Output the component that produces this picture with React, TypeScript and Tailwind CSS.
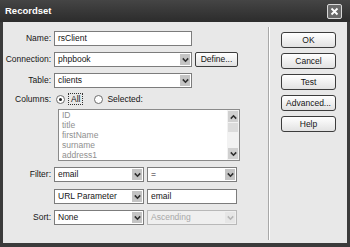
import React from "react";

const font = { fontFamily: '"Liberation Sans", Arial, sans-serif' };

function Chevron({ up = false, light = false }: { up?: boolean; light?: boolean }) {
  const c = light ? "#b5b5b5" : "#2f2f2f";
  return (
    <svg width="7" height="6" viewBox="0 0 7 6">
      {up ? (
        <polyline points="0.8,4.6 3.5,1.8 6.2,4.6" fill="none" stroke={c} strokeWidth="1.6" />
      ) : (
        <polyline points="0.8,1.4 3.5,4.2 6.2,1.4" fill="none" stroke={c} strokeWidth="1.6" />
      )}
    </svg>
  );
}

function Select({ value, className, disabled = false }: { value: string; className: string; disabled?: boolean }) {
  return (
    <div
      className={`flex items-stretch border ${disabled ? "border-[#b8b8b8] bg-[#efefef] text-[#a8a8a8]" : "border-[#7c7c7c] bg-white text-[#151515]"} ${className}`}
    >
      <span className="flex-1 pl-[3px] leading-[13px] truncate">{value}</span>
      <span
        className={`m-px flex w-[10px] items-center justify-center ${disabled ? "bg-[#e6e6e6]" : "bg-[#c4c4c4]"}`}
      >
        <Chevron light={disabled} />
      </span>
    </div>
  );
}

function TextField({ value, className }: { value: string; className: string }) {
  return (
    <div className={`border border-[#7c7c7c] bg-white pl-[3px] leading-[13px] text-[#151515] ${className}`}>
      {value}
    </div>
  );
}

function Label({ children }: { children?: React.ReactNode }) {
  return <span className="w-[51px] shrink-0 pr-[3px] text-right text-[#151515]">{children}</span>;
}

function Btn({ children }: { children: React.ReactNode }) {
  return (
    <div className="flex h-[16px] w-[55px] items-center justify-center rounded-[3px] border border-[#3c3c3c] bg-gradient-to-b from-white to-[#e2e2e2] text-[#151515]">
      {children}
    </div>
  );
}

const columns = ["ID", "title", "firstName", "surname", "address1"];

export default function App() {
  return (
    <div className="flex h-[247px] w-[350px] flex-col text-[8.5px]" style={font}>
      <div className="flex h-[22px] items-center justify-between bg-gradient-to-b from-[#454545] to-[#2c2c2c] pl-[5px] pr-[8px]">
        <span className="text-[9.5px] font-bold text-white">Recordset</span>
        <span className="flex h-[15px] w-[15px] items-center justify-center rounded-[2px] border border-[#d8d8d8] bg-[#6a6a6a]">
          <svg width="9" height="9" viewBox="0 0 9 9">
            <path d="M1.5 1.5 L7.5 7.5 M7.5 1.5 L1.5 7.5" stroke="white" strokeWidth="1.8" />
          </svg>
        </span>
      </div>
      <div className="flex flex-1 border-x-[3px] border-b-[4px] border-[#3b3b3b] bg-[#e8e8e8]">
        <div className="flex w-[265px] flex-col pt-[9px]">
          <div className="flex h-[15px] items-center">
            <Label>Name:</Label>
            <TextField value="rsClient" className="h-[15px] w-[138px]" />
          </div>
          <div className="mt-[6px] flex h-[15px] items-center">
            <Label>Connection:</Label>
            <Select value="phpbook" className="h-[15px] w-[138px]" />
            <div className="ml-[3px] flex h-[15px] w-[43px] items-center justify-center rounded-[2px] border border-[#3c3c3c] bg-gradient-to-b from-white to-[#e2e2e2] text-[#151515]">
              Define...
            </div>
          </div>
          <div className="mt-[6px] flex h-[15px] items-center">
            <Label>Table:</Label>
            <Select value="clients" className="h-[15px] w-[138px]" />
          </div>
          <div className="mt-[5px] flex h-[12px] items-center">
            <Label>Columns:</Label>
            <span className="ml-[2px] flex h-[9px] w-[9px] items-center justify-center rounded-full border border-[#6c6c6c] bg-white">
              <span className="h-[3px] w-[3px] rounded-full bg-[#222]" />
            </span>
            <span className="ml-[3px] border border-dotted border-[#333] px-[2px] leading-[10px] text-[#151515]">All</span>
            <span className="ml-[11px] h-[9px] w-[9px] rounded-full border border-[#6c6c6c] bg-white" />
            <span className="ml-[4px] text-[#151515]">Selected:</span>
          </div>
          <div className="ml-[55px] mt-[4px] flex h-[52px] w-[182px] border border-[#8a8a8a] bg-white">
            <div className="flex flex-1 flex-col pl-[3px] leading-[10px] text-[#8f8f8f]">
              {columns.map((c) => (
                <span key={c}>{c}</span>
              ))}
            </div>
            <div className="flex w-[12px] flex-col bg-[#f2f2f2]">
              <span className="m-px flex h-[11px] items-center justify-center bg-[#d0d0d0]">
                <Chevron up />
              </span>
              <span className="mx-px h-[9px] bg-[#dcdcdc]" />
              <span className="flex-1" />
              <span className="m-px flex h-[11px] items-center justify-center bg-[#d0d0d0]">
                <Chevron />
              </span>
            </div>
          </div>
          <div className="mt-[6px] flex h-[15px] items-center">
            <Label>Filter:</Label>
            <Select value="email" className="h-[15px] w-[90px]" />
            <Select value="=" className="ml-[3px] h-[15px] w-[90px]" />
          </div>
          <div className="mt-[7px] flex h-[15px] items-center">
            <Label />
            <Select value="URL Parameter" className="h-[15px] w-[90px]" />
            <TextField value="email" className="ml-[3px] h-[15px] w-[90px]" />
          </div>
          <div className="mt-[6px] flex h-[15px] items-center">
            <Label>Sort:</Label>
            <Select value="None" className="h-[15px] w-[90px]" />
            <Select value="Ascending" disabled className="ml-[3px] h-[15px] w-[90px]" />
          </div>
        </div>
        <div className="mb-[3px] mt-[5px] w-[2px] border-l border-r border-l-[#a8a8a8] border-r-white" />
        <div className="flex flex-col gap-[5px] pl-[11px] pt-[10px]">
          <Btn>OK</Btn>
          <Btn>Cancel</Btn>
          <Btn>Test</Btn>
          <Btn>Advanced...</Btn>
          <Btn>Help</Btn>
        </div>
      </div>
    </div>
  );
}
